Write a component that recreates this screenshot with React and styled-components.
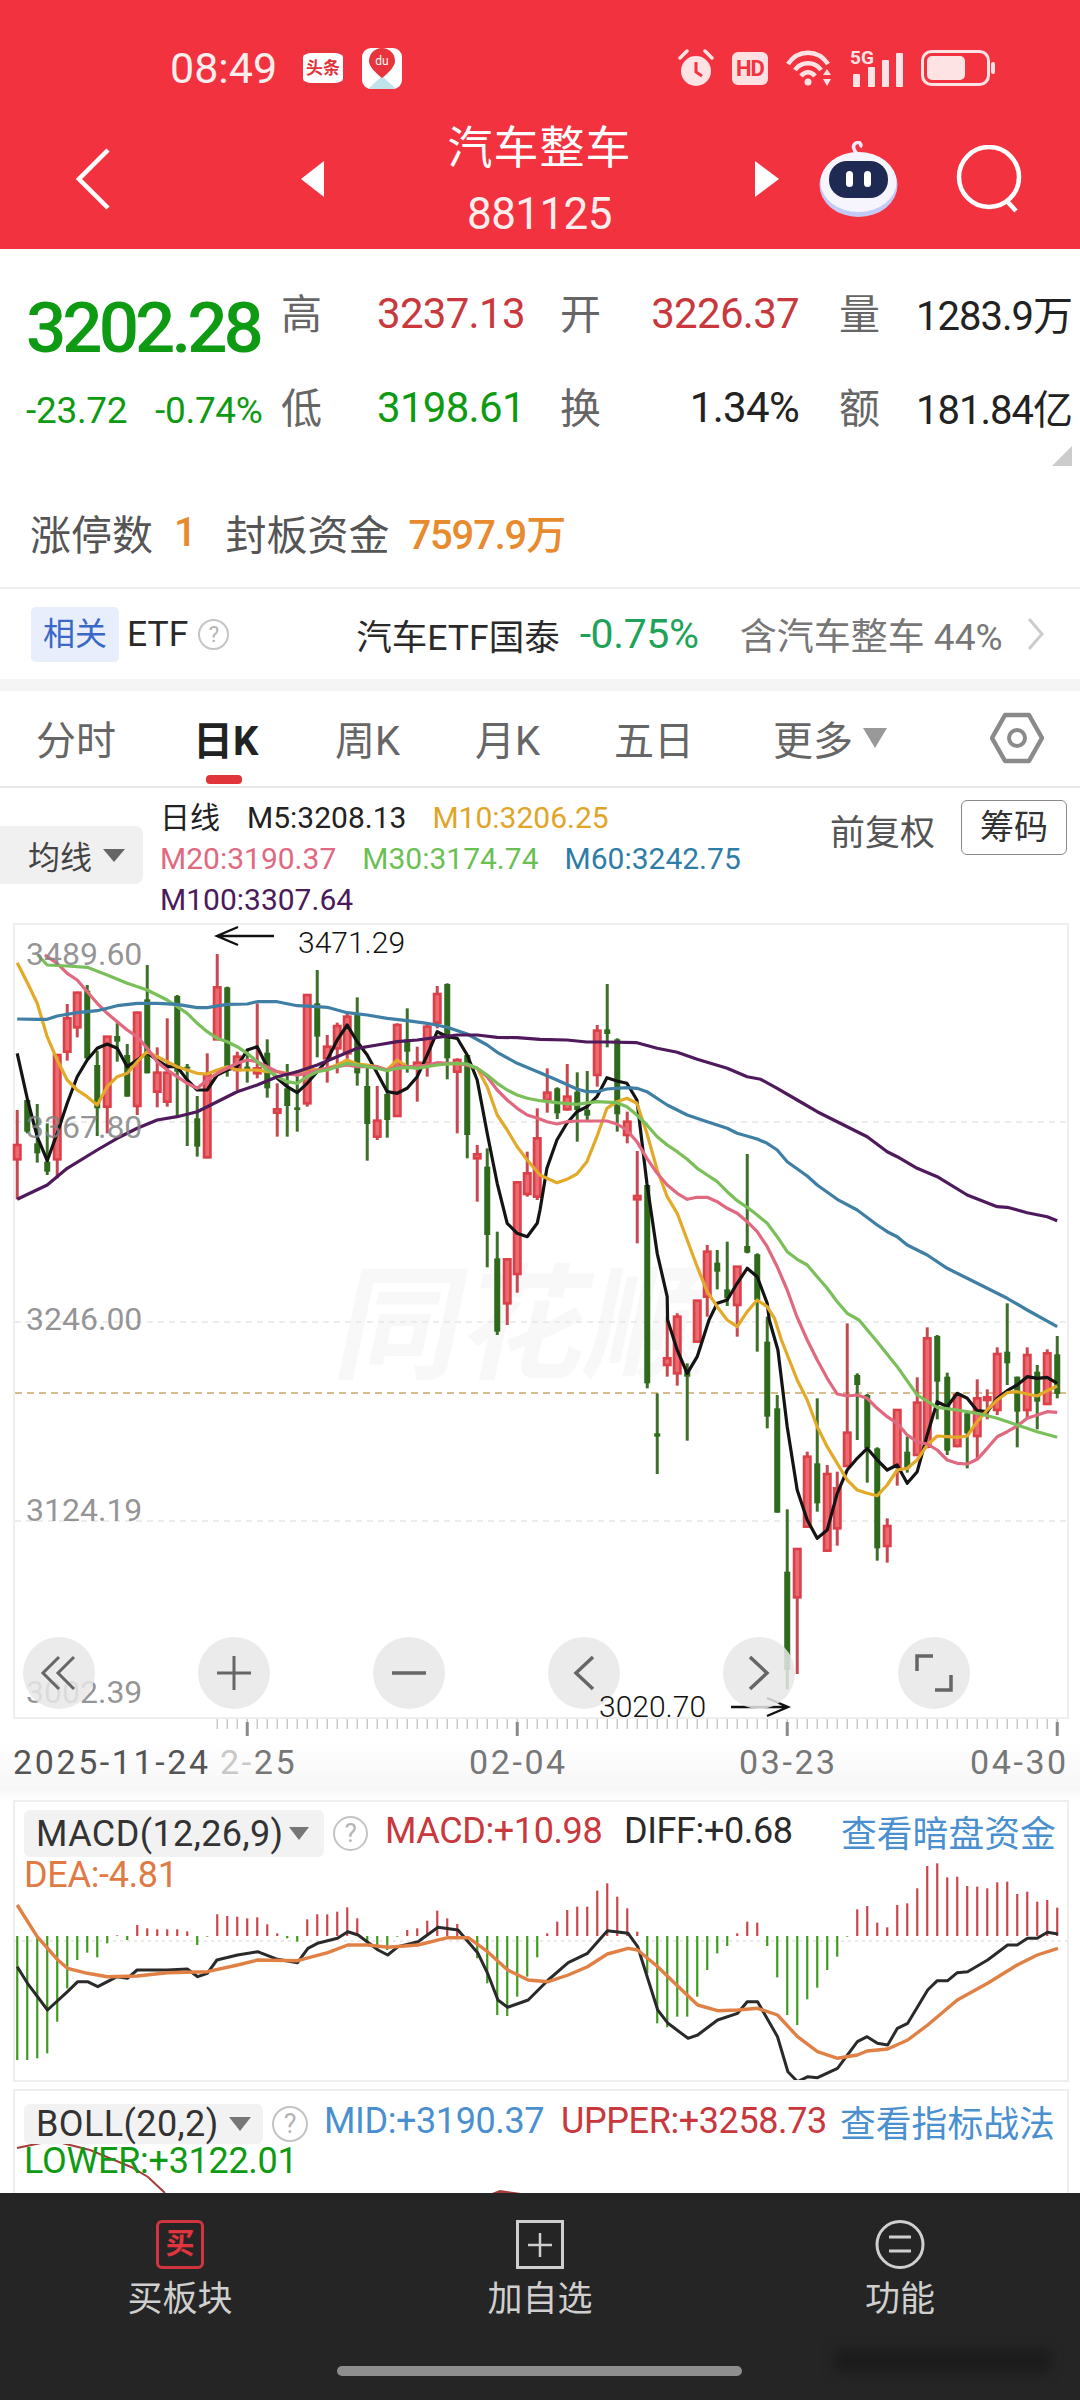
import React from 'react';
import styled, { createGlobalStyle } from 'styled-components';

const GlobalStyle = createGlobalStyle`
  html, body { margin: 0; padding: 0; background: #fff; }
  body { font-family: Roboto, "Noto Sans CJK SC", sans-serif; }
  * { box-sizing: border-box; }
`;

const RED = '#c8383c';
const GREEN = '#0f9a14';
const LINK = '#4a90d0';

// [high, bodyTop, bodyBottom, low], measured off the reference, y = 920 + v / 3
const candles = [
  ['r',570,675,718,838],['g',540,540,635,640],['g',552,670,700,728],['g',610,725,755,765],['r',402,405,718,775],
  ['r',252,295,395,422],['r',215,218,322,352],['g',195,212,415,418],['g',392,435,565,648],['r',348,350,560,640],
  ['g',310,348,365,425],['g',372,405,530,530],['r',275,278,558,585],['g',135,238,460,460],['r',382,458,515,562],
  ['r',295,458,545,560],['g',225,228,455,590],['g',432,440,445,678],['g',528,595,680,710],['r',400,465,712,715],
  ['r',102,202,358,360],['g',200,202,450,470],['r',395,410,450,510],['g',390,440,450,488],['r',250,445,460,475],
  ['g',358,398,505,533],['r',490,568,578,650],['g',432,505,558,650],['g',450,562,570,635],['r',222,225,550,560],
  ['g',150,250,350,412],['r',345,380,415,488],['r',308,318,385,460],['r',280,290,400,420],['g',232,280,460,497],
  ['g',440,498,612,722],['r',498,602,650,660],['g',450,522,600,653],['r',310,315,588,590],['g',265,358,395,458],
  ['r',380,428,440,545],['r',312,320,430,470],['r',198,222,308,325],['g',190,192,415,478],['r',415,420,455,640],
  ['g',405,405,645,715],['r',675,703,715,845],['g',685,740,945,1042],['g',935,1015,1235,1245],['r',1018,1018,1150,1215],
  ['r',785,787,1062,1118],['r',695,760,822,830],['r',565,655,830,840],['r',445,518,540,578],['g',502,505,580,597],
  ['r',432,530,568,572],['g',457,515,570,665],['g',453,570,587,600],['r',315,332,465,500],['g',192,328,342,382],
  ['g',355,358,583,635],['r',575,605,645,670],['r',693,828,838,970],['g',795,795,1390,1405],['g',1420,1540,1550,1662],
  ['r',1190,1315,1335,1370],['r',1180,1190,1360,1397],['g',1330,1350,1370,1562],['r',1140,1142,1265,1265],['r',975,995,1130,1190],
  ['g',990,1028,1055,1108],['g',965,1108,1135,1158],['r',1040,1040,1155,1250],['g',702,978,998,1000],['g',1000,1003,1140,1295],
  ['g',1190,1265,1490,1525],['g',1425,1465,1778,1778],['g',1768,1955,2250,2308],['r',1885,1887,2032,2262],['r',1595,1610,1820,1822],
  ['g',1435,1630,1750,1775],['r',1635,1662,1892,1895],['r',1655,1705,1825,1877],['r',1210,1538,1638,1640],['g',1360,1365,1395,1560],
  ['g',1422,1425,1585,1688],['g',1582,1585,1885,1922],['r',1795,1818,1878,1928],['r',1468,1470,1640,1697],['g',1550,1595,1645,1658],
  ['r',1372,1448,1605,1605],['r',1222,1255,1580,1585],['g',1245,1248,1385,1498],['g',1358,1370,1592,1605],['r',1420,1425,1578,1582],
  ['g',1480,1480,1540,1645],['r',1378,1435,1548,1620],['r',1408,1432,1440,1498],['r',1282,1302,1470,1485],['g',1150,1295,1330,1395],
  ['g',1370,1370,1475,1582],['r',1282,1305,1470,1495],['g',1335,1355,1445,1528],['r',1288,1300,1452,1455],['g',1248,1303,1422,1435],
];

const left = (pts) => pts.map(([x, y]) => [x / 2.9, 920 + y / 3]);
const right = (pts) => pts.map(([x, y]) => [540 + x / 2.9, 920 + y / 3]);
const rightLow = (pts) => pts.map(([x, y]) => [540 + x / 2.9, 1320 + y / 3]);
const wide = (pts) => pts.map(([x, y]) => [x / 1.452, 1770 + y / 3]);
const toPoints = (pts) => pts.map(([x, y]) => `${x.toFixed(1)},${y.toFixed(1)}`).join(' ');

const m5 = [
  ...left([[50,400],[80,540],[108,650],[137,722],[166,640],[195,550],[224,470],[253,420],[282,385],[311,372],[340,385],[369,440],[398,420],[427,398],[456,420],[485,440],[514,440],[543,480],[572,510],[601,510],[630,465],[659,450],[688,440],[717,390],[746,380],[775,440],[804,475],[833,500],[862,518],[891,490],[920,455],[949,420],[978,360],[1007,315],[1036,365],[1065,405],[1094,460],[1123,515],[1152,520],[1181,505],[1210,470],[1239,405],[1268,335],[1297,350],[1326,355],[1355,405],[1384,480],[1413,640],[1442,790],[1471,910],[1500,940],[1529,950]]),
  ...right([[-8,910],[0,870],[20,745],[49,660],[78,610],[107,575],[136,560],[165,530],[194,473],[223,483],[252,490],[281,540],[310,790],[340,1000],[369,1130]]),
  ...rightLow([[370,0],[398,90],[427,160],[456,110],[490,0]]),
  ...right([[514,1150],[543,1140],[572,1090],[601,1045],[630,1070],[659,1150]]),
  ...rightLow([[665,0],[690,90],[717,320],[746,510],[775,600],[804,655],[833,630],[862,520],[891,450],[920,415],[949,385],[978,420],[1007,450],[1036,435],[1065,490],[1094,455],[1123,345],[1152,245],[1181,260],[1210,220],[1239,235],[1268,272],[1297,275],[1326,235],[1355,212],[1384,195],[1413,170],[1442,175],[1471,172],[1500,190]]),
];
const m10 = [
  ...left([[50,128],[80,190],[108,250],[137,350],[166,420],[195,480],[224,510],[253,530],[282,555],[311,500],[340,470],[369,460],[398,425],[427,395],[456,410],[485,425],[514,440],[543,450],[572,460],[601,462],[630,450],[659,440],[688,450],[717,450],[746,450],[775,455],[804,455],[833,460],[862,465],[891,445],[920,450],[949,445],[978,435],[1007,420],[1036,432],[1065,435],[1094,440],[1123,450],[1152,420],[1181,440],[1210,440],[1239,435],[1268,432],[1297,432],[1326,430],[1355,435],[1384,445],[1413,500],[1442,585],[1471,630],[1500,680],[1529,720]]),
  ...right([[0,765],[20,775],[49,788],[78,778],[107,762],[136,725],[165,650],[194,565],[223,545],[252,535],[281,550],[310,640],[340,750],[369,830],[398,880],[427,960],[456,1040],[485,1115],[514,1160],[543,1200],[572,1220],[601,1175],[630,1140],[659,1160],[680,1195]]),
  ...rightLow([[700,60],[746,180],[775,240],[804,320],[833,380],[862,430],[891,480],[920,510],[949,520],[978,527],[1007,495],[1036,450],[1065,445],[1094,420],[1123,375],[1152,348],[1181,350],[1210,352],[1239,348],[1268,305],[1297,270],[1326,240],[1355,218],[1384,215],[1413,222],[1442,228],[1471,212],[1500,198]]),
];
const m20 = [
  ...left([[130,105],[166,130],[195,160],[224,180],[253,215],[282,250],[311,280],[340,305],[369,330],[398,350],[427,385],[456,425],[485,450],[514,470],[543,490],[572,505],[601,480],[630,460],[659,445],[688,430],[717,420],[746,425],[775,440],[804,455],[833,462],[862,465],[891,460],[920,450],[949,445],[978,440],[1007,435],[1036,440],[1065,440],[1094,440],[1123,450],[1152,440],[1181,440],[1210,440],[1239,435],[1268,428],[1297,430],[1326,430],[1355,435],[1384,445],[1413,470],[1442,510],[1471,540],[1500,565],[1529,585]]),
  ...right([[0,597],[20,605],[49,612],[78,605],[107,603],[136,603],[165,603],[194,603],[223,612],[252,630],[281,665],[310,715],[340,760],[369,795],[398,820],[427,838],[456,832],[485,832],[514,845],[543,865],[572,880],[601,905],[630,935],[659,980],[688,1040],[717,1110],[745,1190]]),
  ...rightLow([[775,60],[804,120],[833,175],[862,222],[891,228],[920,225],[949,235],[978,265],[1007,290],[1036,310],[1065,345],[1094,365],[1123,372],[1152,390],[1181,420],[1210,430],[1239,432],[1268,418],[1297,385],[1326,350],[1355,335],[1384,318],[1413,295],[1442,285],[1471,275],[1500,277]]),
];
const m30 = [
  ...left([[110,105],[137,135],[195,138],[253,142],[311,165],[369,190],[427,210],[485,240],[514,260],[543,280],[572,310],[601,335],[630,355],[659,365],[688,380],[717,400],[746,425],[775,450],[804,470],[833,485],[862,490],[891,470],[920,455],[949,450],[978,440],[1007,430],[1036,435],[1065,440],[1094,445],[1123,452],[1152,445],[1181,442],[1210,445],[1239,440],[1268,435],[1297,432],[1326,430],[1355,432],[1384,445],[1413,465],[1442,490],[1471,510],[1500,525],[1529,535]]),
  ...right([[0,542],[49,548],[107,553],[165,545],[223,548],[252,560],[281,585],[310,615],[340,650],[369,675],[398,695],[427,718],[456,745],[485,765],[514,785],[543,815],[572,842],[601,862],[630,885],[659,910],[688,950],[717,995],[746,1018],[775,1035],[804,1070],[833,1105],[862,1145],[891,1180]]),
  ...rightLow([[925,0],[978,65],[1036,140],[1094,225],[1152,262],[1210,270],[1268,280],[1326,295],[1384,315],[1442,335],[1500,352]]),
];
const m60 = [
  ...left([[50,297],[108,298],[137,298],[166,288],[224,278],[282,272],[340,257],[398,250],[456,250],[514,253],[572,263],[601,263],[659,253],[717,252],[746,245],[804,245],[862,257],[920,260],[949,262],[1007,278],[1065,285],[1123,295],[1181,302],[1239,310],[1297,322],[1355,342],[1413,375],[1442,397],[1500,430]]),
  ...right([[0,458],[49,480],[107,507],[136,515],[165,515],[194,507],[252,503],[281,505],[310,515],[369,555],[427,585],[485,605],[543,625],[572,640],[630,657],[659,670],[688,690],[717,725],[775,768],[804,795],[862,838],[920,870],[978,915],[1007,935],[1036,950],[1065,975],[1123,1005],[1181,1045],[1239,1075],[1297,1105],[1355,1135],[1413,1170],[1500,1220]]),
];
const m100 = [
  ...left([[50,838],[137,795],[195,745],[282,690],[340,655],[398,625],[456,600],[514,590],[572,575],[630,545],[688,515],[746,495],[804,470],[862,455],[920,435],[978,410],[1036,385],[1094,375],[1152,365],[1210,360],[1268,352],[1326,345],[1384,345],[1442,352],[1500,353]]),
  ...right([[0,358],[78,360],[136,366],[194,366],[281,368],[340,385],[398,397],[456,418],[543,445],[601,470],[640,478],[688,505],[746,540],[804,575],[862,605],[949,650],[1007,695],[1036,710],[1094,745],[1152,770],[1239,825],[1326,860],[1355,862],[1413,878],[1471,890],[1500,902]]),
];

const maLines = [
  { points: m5, color: '#141414' },
  { points: m10, color: '#e3a928' },
  { points: m20, color: '#e0697f' },
  { points: m30, color: '#7abf5a' },
  { points: m60, color: '#3f7fa6' },
  { points: m100, color: '#4f1a5b' },
];

const macdBars = [870,870,865,850,755,655,570,548,562,520,496,510,465,475,478,478,478,484,525,500,433,438,440,445,442,463,490,505,515,448,433,433,425,412,445,515,530,540,500,480,475,452,422,445,462,510,565,640,735,738,680,620,562,490,455,420,410,410,362,340,380,415,485,610,760,772,740,740,680,600,550,528,490,455,458,528,622,735,765,688,653,600,560,500,418,408,458,472,405,400,355,288,280,322,320,348,350,355,337,335,372,365,395,390,413];

const diffLine = wide([[25,590],[40,640],[69,720],[98,665],[113,635],[127,635],[142,650],[170,620],[185,625],[199,600],[243,600],[272,597],[287,620],[301,610],[315,570],[345,555],[374,545],[403,568],[432,578],[447,535],[461,520],[490,505],[505,485],[520,495],[549,540],[563,555],[578,530],[607,515],[636,472],[665,480],[694,550],[708,610],[723,690],[737,712],[767,690],[796,630],[825,578],[853,550],[882,482],[912,490],[926,530],[955,720],[970,760],[999,805],[1013,795],[1042,750],[1071,730],[1085,695],[1100,695],[1129,800],[1144,905],[1158,935],[1173,920],[1187,923],[1216,895],[1245,815],[1259,800],[1274,820],[1289,825],[1303,775],[1318,760],[1347,660],[1361,632],[1376,632],[1390,608],[1405,605],[1434,570],[1463,525],[1477,525],[1492,505],[1506,505],[1521,487],[1536,492]]);
const deaLine = wide([[25,405],[54,500],[84,570],[98,595],[127,610],[156,620],[199,618],[243,608],[301,605],[345,585],[374,570],[432,572],[476,548],[505,525],[534,525],[563,532],[607,525],[650,503],[680,503],[708,545],[737,600],[767,630],[796,635],[825,615],[853,590],[882,552],[912,535],[926,540],[955,590],[985,650],[1013,705],[1042,722],[1071,720],[1100,715],[1129,735],[1158,800],[1187,845],[1216,865],[1245,855],[1259,843],[1289,837],[1318,810],[1347,765],[1390,690],[1434,640],[1477,585],[1506,555],[1536,535]]);

const Page = styled.div`
  width: 1080px;
  height: 2400px;
  overflow: hidden;
  display: flex;
  flex-direction: column;
  background: #fff;
  color: #222;
`;

const Header = styled.header`
  height: 249px;
  flex: none;
  background: #f2333f;
  color: #fff;
  padding-top: 48px;
`;

const StatusRow = styled.div`
  display: flex;
  justify-content: space-between;
  height: 40px;
  padding: 0 85px 0 170px;
`;

const StatusGroup = styled.div`
  display: flex;
  align-items: center;
`;

const Clock = styled.span`
  font-size: 43px;
  line-height: 44px;
  width: 133px;
  color: #fdeeee;
`;

const AppBadge = styled.span`
  width: 40px;
  height: 40px;
  border-radius: 9px;
  background: #fff;
  margin-right: 19px;
  color: #e0333a;
  font-size: 17px;
  font-weight: 700;
  line-height: 30px;
  text-align: center;
  border-top: 5px solid #e8343c;
  border-bottom: 5px solid #e8343c;
  white-space: nowrap;
`;

const HdBadge = styled.span`
  width: 36px;
  height: 33px;
  border-radius: 6px;
  background: #fde1e2;
  color: #f2333f;
  font-size: 22px;
  font-weight: 700;
  text-align: center;
  line-height: 33px;
  margin: 0 18px;
  letter-spacing: -1px;
`;

const NavRow = styled.nav`
  display: flex;
  align-items: center;
  height: 120px;
  margin-top: 31px;
  padding-left: 76px;
`;

const Triangle = styled.span`
  width: 0;
  height: 0;
  flex: none;
  border-top: 18px solid transparent;
  border-bottom: 18px solid transparent;
  ${(p) => (p.$dir === 'left' ? 'border-right: 23px solid #fff;' : 'border-left: 24px solid #fff;')}
  margin-left: ${(p) => p.$gap || 0}px;
`;

const TitleBlock = styled.div`
  width: 431px;
  flex: none;
  text-align: center;
`;

const Title = styled.div`
  font-size: 45px;
  line-height: 60px;
  letter-spacing: 1px;
`;

const Code = styled.div`
  font-size: 44px;
  line-height: 50px;
  margin-top: 10px;
  letter-spacing: -0.6px;
  color: #fdeeee;
`;

const QuoteSection = styled.section`
  position: relative;
  height: 340px;
  flex: none;
  padding-top: 34px;
  border-bottom: 2px solid #eeeeee;
`;

const QuoteGrid = styled.div`
  display: grid;
  grid-template-columns: 281px 96px 183px 80px 199px 77px 164px;
  grid-template-rows: 60px 60px;
  row-gap: 34px;
  align-items: center;
`;

const PriceCell = styled.div`
  padding: 30px 0 0 26px;
  font-size: 71px;
  line-height: 60px;
  letter-spacing: -4px;
  color: ${GREEN};
  font-weight: 500;
`;

const ChangeCell = styled.div`
  display: flex;
  padding: 6px 0 0 26px;
  font-size: 37px;
  letter-spacing: -0.3px;
  color: ${GREEN};
`;

const ChangeItem = styled.span`
  width: 129px;
  flex: none;
`;

const QuoteLabel = styled.div`
  font-size: 41px;
  color: #666;
  padding-bottom: 5px;
`;

const QuoteValue = styled.div`
  font-size: ${(p) => p.$size || 42}px;
  letter-spacing: ${(p) => (p.$size ? -1 : -0.7)}px;
  white-space: nowrap;
  color: ${(p) => p.$color || '#222'};
  ${(p) => p.$end && 'text-align: right; padding-right: 40px;'}
`;

const CornerMark = styled.span`
  position: absolute;
  right: 8px;
  top: 197px;
  width: 0;
  height: 0;
  border-left: 20px solid transparent;
  border-bottom: 20px solid #cccccc;
`;

const LimitRow = styled.div`
  display: flex;
  align-items: center;
  height: 40px;
  margin-top: 75px;
  padding-left: 30px;
  font-size: 41px;
  color: #555;
`;

const LimitValue = styled.span`
  color: #e88a2e;
  font-size: 40px;
  letter-spacing: -1.2px;
  margin: 0 ${(p) => p.$after || 0}px 0 ${(p) => p.$before || 0}px;
  font-weight: 500;
`;

const EtfRow = styled.section`
  display: flex;
  align-items: center;
  height: 90px;
  flex: none;
  padding-left: 31px;
  font-size: 35.5px;
`;

const Pill = styled.span`
  width: 88px;
  height: 55px;
  flex: none;
  border-radius: 5px;
  background: #e8eefb;
  color: #3a68c8;
  font-size: 32px;
  line-height: 55px;
  text-align: center;
`;

const EtfName = styled.span`
  color: #2a2a2a;
  margin-left: ${(p) => p.$gap || 0}px;
  white-space: nowrap;
`;

const EtfChange = styled.span`
  color: #1fa35a;
  margin-left: 20px;
  font-size: 41px;
  letter-spacing: -0.4px;
  width: 160px;
  flex: none;
`;

const EtfNote = styled.span`
  color: #777;
  font-size: 37px;
  white-space: nowrap;
`;

const HelpMark = styled.span`
  width: ${(p) => p.$size || 31}px;
  height: ${(p) => p.$size || 31}px;
  flex: none;
  border: 2px solid #c4c4c4;
  border-radius: 50%;
  color: #b4b4b4;
  font-size: ${(p) => (p.$size || 31) - 9}px;
  line-height: ${(p) => (p.$size || 31) - 4}px;
  text-align: center;
  margin-left: ${(p) => p.$gap || 0}px;
`;

const Band = styled.div`
  height: 12px;
  flex: none;
  background: #f5f5f5;
`;

const TabBar = styled.div`
  position: relative;
  display: grid;
  grid-template-columns: 157px 142px 140px 139px 159px 217px 1fr;
  align-items: center;
  height: 97px;
  flex: none;
  padding: 0 0 2px 36px;
  border-bottom: 2px solid #e8e8e8;
`;

const Tab = styled.span`
  position: relative;
  display: flex;
  align-items: center;
  font-size: 40px;
  color: ${(p) => (p.$active ? '#222' : '#666')};
  font-weight: ${(p) => (p.$active ? 700 : 400)};
`;

const ActiveMark = styled.i`
  position: absolute;
  left: 13px;
  top: 66px;
  width: 36px;
  height: 9px;
  border-radius: 4px;
  background: #e0333a;
`;

const Caret = styled.span`
  display: inline-block;
  width: 0;
  height: 0;
  flex: none;
  border-left: ${(p) => p.$w / 2}px solid transparent;
  border-right: ${(p) => p.$w / 2}px solid transparent;
  border-top: ${(p) => p.$h}px solid ${(p) => p.$color || '#777'};
  margin-left: ${(p) => p.$gap || 0}px;
`;

const LegendRow = styled.section`
  display: flex;
  height: 135px;
  flex: none;
`;

const MaChip = styled.span`
  display: flex;
  align-items: center;
  width: 143px;
  height: 58px;
  margin-top: 38px;
  padding-left: 28px;
  border-radius: 0 8px 8px 0;
  background: #f0f0f0;
  font-size: 32px;
  color: #444;
`;

const LegendLines = styled.div`
  width: 687px;
  flex: none;
  padding: 9px 0 0 17px;
  font-size: 30px;
  line-height: 41px;
`;

const LegendLine = styled.div`
  display: flex;
  white-space: nowrap;
`;

const LegendItem = styled.span`
  color: ${(p) => p.$color || '#222'};
  margin-right: ${(p) => p.$gap || 26}px;
`;

const AdjustLabel = styled.span`
  font-size: 35px;
  color: #555;
  margin-top: 16px;
  white-space: nowrap;
`;

const ChipButton = styled.span`
  width: 106px;
  height: 55px;
  margin: 12px 0 0 26px;
  border: 1.5px solid #8a8a8a;
  border-radius: 6px;
  font-size: 34px;
  line-height: 52px;
  text-align: center;
  color: #333;
`;

const ChartFrame = styled.div`
  position: relative;
  width: 1056px;
  height: 796px;
  flex: none;
  margin-left: 13px;
  border: 2px solid #eeeeee;
`;

const ChartSvg = styled.svg`
  position: absolute;
  inset: 0;
  width: 100%;
  height: 100%;
  overflow: visible;
`;

const Watermark = styled.span`
  position: absolute;
  left: 325px;
  top: 332px;
  font-size: 125px;
  line-height: 140px;
  font-weight: 700;
  color: #f8f8f8;
  transform: skewX(-12deg);
  white-space: nowrap;
`;

const AxisLabel = styled.span`
  position: absolute;
  left: 11px;
  top: ${(p) => p.$top}px;
  font-size: 32px;
  line-height: 32px;
  color: rgba(130, 130, 130, 0.85);
`;

const PeakLabel = styled.span`
  position: absolute;
  left: ${(p) => p.$left}px;
  top: ${(p) => p.$top}px;
  font-size: 30px;
  line-height: 30px;
  font-weight: 300;
  color: #111;
`;

const ControlRow = styled.div`
  position: absolute;
  left: 8px;
  top: 712px;
  display: flex;
  gap: 103px;
`;

const RoundControl = styled.span`
  display: flex;
  align-items: center;
  justify-content: center;
  width: 72px;
  height: 72px;
  border-radius: 50%;
  background: rgba(232, 232, 232, 0.85);
`;

const TimeAxis = styled.div`
  height: 81px;
  flex: none;
  background: linear-gradient(#fff 20px, #f7f7f7 70px, #fff 81px);
`;

const TickSvg = styled.svg`
  display: block;
  width: 1080px;
  height: 18px;
`;

const DateRow = styled.div`
  display: grid;
  grid-template-columns: 207px 249px 270px 231px 1fr;
  padding: 8px 0 0 13px;
  font-size: 34px;
  line-height: 34px;
  letter-spacing: 2.6px;
  color: #777;
`;

const DateLabel = styled.span`
  color: ${(p) => p.$color || '#777'};
  white-space: nowrap;
`;

const Faded = styled.span`
  color: #c8c8c8;
`;

const IndicatorPanel = styled.section`
  position: relative;
  width: 1056px;
  height: ${(p) => p.$height}px;
  flex: none;
  overflow: hidden;
  margin: ${(p) => p.$top || 0}px 0 0 13px;
  border: 2px solid #eeeeee;
  ${(p) => p.$open && 'border-bottom: 0;'}
`;

const PanelSvg = styled.svg`
  position: absolute;
  inset: 0;
  width: 100%;
  height: 100%;
`;

const PanelHead = styled.div`
  position: relative;
  display: flex;
  align-items: center;
  margin-top: ${(p) => p.$top}px;
  padding-left: 9px;
  font-size: 36px;
  letter-spacing: -0.4px;
  white-space: nowrap;
`;

const IndicatorChip = styled.span`
  display: flex;
  align-items: center;
  width: ${(p) => p.$width}px;
  height: ${(p) => p.$height}px;
  flex: none;
  padding-left: 12px;
  border-radius: 6px;
  background: #f2f2f2;
  color: #333;
  font-size: 36px;
  letter-spacing: 0.4px;
`;

const PanelValue = styled.span`
  color: ${(p) => p.$color};
  margin: -5px 0 0 ${(p) => p.$gap || 0}px;
  width: ${(p) => p.$width}px;
  flex: none;
`;

const PanelLink = styled.span`
  color: ${LINK};
  font-size: 35.8px;
  letter-spacing: 0;
  margin-top: -5px;
`;

const PanelSecond = styled.div`
  position: relative;
  padding-left: 9px;
  font-size: 36px;
  line-height: 40px;
  letter-spacing: -0.3px;
  margin-top: ${(p) => p.$top}px;
  color: ${(p) => p.$color};
`;

const BottomBar = styled.footer`
  position: relative;
  height: 207px;
  flex: none;
  background: #252525;
  padding-top: 27px;
`;

const ActionGrid = styled.div`
  display: grid;
  grid-template-columns: repeat(3, 360px);
`;

const Action = styled.div`
  display: flex;
  flex-direction: column;
  align-items: center;
  gap: 13px;
  color: #cfcfcf;
  font-size: 35px;
  line-height: 36px;
`;

const BuyIcon = styled.span`
  width: 48px;
  height: 49px;
  border: 3px solid #d0353f;
  border-radius: 6px;
  color: #e0353f;
  font-size: 29px;
  line-height: 42px;
  font-weight: 700;
  text-align: center;
`;

const HomePill = styled.div`
  width: 405px;
  height: 10px;
  margin: 48px 0 0 337px;
  border-radius: 5px;
  background: #8e8e8e;
`;

const ScreenSmudge = styled.div`
  position: absolute;
  left: 835px;
  top: 157px;
  width: 215px;
  height: 22px;
  background: #1b1b1b;
  filter: blur(6px);
`;

function AlarmIcon() {
  return (
    <svg width="36" height="38" viewBox="0 0 36 38">
      <path d="M2 9 L9 2 M34 9 L27 2" stroke="#fde3e4" strokeWidth="3.5" strokeLinecap="round" />
      <circle cx="18" cy="22" r="15" fill="#fde3e4" />
      <path d="M18 13 V23 L24 27" stroke="#f2333f" strokeWidth="3" fill="none" />
    </svg>
  );
}

function WifiIcon() {
  return (
    <svg width="49" height="38" viewBox="0 0 49 38">
      <g fill="none" stroke="#fde3e4" strokeWidth="4.5">
        <path d="M2 15 C12 0 32 0 42 15" />
        <path d="M9 21 C15 12 29 12 35 21" />
        <path d="M15 27 C19 22 25 22 29 27" />
      </g>
      <circle cx="22" cy="33" r="3.5" fill="#fde3e4" />
      <path d="M37 26 L41 20 L45 26 Z M37 30 L45 30 L41 37 Z" fill="#fde3e4" />
    </svg>
  );
}

function SignalIcon() {
  return (
    <svg width="53" height="38" viewBox="0 0 53 38" overflow="visible">
      <text x="0" y="15" fontSize="19" fontWeight="700" fill="#fde3e4" fontFamily="Roboto, sans-serif">5G</text>
      <g fill="#fde3e4">
        <rect x="3" y="25" width="7" height="13" rx="1" />
        <rect x="18" y="18" width="7" height="20" rx="1" />
        <rect x="32" y="11" width="7" height="27" rx="1" />
        <rect x="46" y="4" width="7" height="34" rx="1" />
      </g>
    </svg>
  );
}

function BatteryIcon() {
  return (
    <svg width="74" height="36" viewBox="0 0 74 36">
      <rect x="1.5" y="1.5" width="66" height="33" rx="9" fill="none" stroke="#fde3e4" strokeWidth="3" />
      <rect x="6" y="6" width="38" height="24" rx="5" fill="#fde3e4" />
      <rect x="70" y="12" width="4" height="12" rx="2" fill="#fde3e4" />
    </svg>
  );
}

function RobotIcon() {
  return (
    <svg width="79" height="76" viewBox="0 0 79 76">
      <path d="M39 14 C34 9 33 4 37 2 C41 0 43 4 41 6" stroke="#eeeafc" strokeWidth="3.5" fill="none" />
      <ellipse cx="39.5" cy="44" rx="39" ry="32" fill="#c4caf5" />
      <ellipse cx="39.5" cy="41" rx="38" ry="30" fill="#f6f5fe" />
      <rect x="10" y="20" width="59" height="37" rx="18" fill="#1f2a52" />
      <rect x="27" y="30" width="7" height="16" rx="3.5" fill="#fff" />
      <rect x="45" y="30" width="7" height="16" rx="3.5" fill="#fff" />
    </svg>
  );
}

function Candle({ index, data }) {
  const [kind, high, top, bottom, low] = data;
  const x = 17.24 + index * 10;
  const y = (v) => 920 + v / 3;
  if (kind === 'g') {
    return (
      <g>
        <line x1={x} x2={x} y1={y(high)} y2={y(low)} stroke="#3c7029" strokeWidth="3" />
        <rect x={x - 3} y={y(top)} width="6" height={Math.max((bottom - top) / 3, 2)} fill="#2f6a1c" />
      </g>
    );
  }
  return (
    <g>
      <line x1={x} x2={x} y1={y(high)} y2={y(top)} stroke="#c8484f" strokeWidth="3" />
      <line x1={x} x2={x} y1={y(bottom)} y2={y(low)} stroke="#c8484f" strokeWidth="3" />
      <rect x={x - 3.2} y={y(top)} width="6.4" height={Math.max((bottom - top) / 3, 2)} fill="#ea6a70" stroke="#dd3f48" strokeWidth="2.6" />
    </g>
  );
}

function MainChart() {
  return (
    <ChartSvg viewBox="15 925 1052 792">
      {[1122, 1322, 1521].map((y) => (
        <line key={y} x1="15" x2="1067" y1={y} y2={y} stroke="#e6e6e6" strokeWidth="1.5" strokeDasharray="6 5" />
      ))}
      <line x1="15" x2="1067" y1="1393" y2="1393" stroke="#c9a86c" strokeWidth="1.5" strokeDasharray="7 5" />
      {candles.map((c, i) => (
        <Candle key={i} index={i} data={c} />
      ))}
      {maLines.map((line) => (
        <polyline key={line.color} points={toPoints(line.points)} fill="none" stroke={line.color} strokeWidth="3.2" strokeLinejoin="round" />
      ))}
      <g fill="none" stroke="#111" strokeWidth="2.4">
        <path d="M217 936 H274 M238 927 L217 936 L238 945" />
        <path d="M731 1707 H788 M767 1698 L788 1707 L767 1716" />
      </g>
    </ChartSvg>
  );
}

function TickRuler() {
  const ticks = [];
  for (let i = 20; i <= 104; i++) {
    ticks.push(17.24 + i * 10);
  }
  const majors = [23, 50, 77, 104].map((i) => 17.24 + i * 10);
  return (
    <TickSvg viewBox="0 1719 1080 18">
      {ticks.map((x) => (
        <line key={x} x1={x} x2={x} y1="1719" y2="1729" stroke="#bdbdbd" strokeWidth="1.2" />
      ))}
      {majors.map((x) => (
        <line key={x} x1={x} x2={x} y1="1722" y2="1736" stroke="#8a8a8a" strokeWidth="3" />
      ))}
    </TickSvg>
  );
}

function MacdChart() {
  const zero = 1770 + 498 / 3;
  return (
    <PanelSvg viewBox="15 1802 1052 278">
      <line x1="15" x2="1067" y1="1941" y2="1941" stroke="#e4e4e4" strokeWidth="1.5" strokeDasharray="3 4" />
      {macdBars.map((v, i) => {
        const x = 17.24 + i * 10;
        return (
          <line key={i} x1={x} x2={x} y1={zero} y2={1770 + v / 3} stroke={v > 498 ? '#3f9a1e' : '#c8464a'} strokeWidth="2.2" />
        );
      })}
      <polyline points={toPoints(diffLine)} fill="none" stroke="#2a2a2a" strokeWidth="3" strokeLinejoin="round" />
      <polyline points={toPoints(deaLine)} fill="none" stroke="#e08045" strokeWidth="3.4" strokeLinejoin="round" />
    </PanelSvg>
  );
}

export default function App() {
  return (
    <Page>
      <GlobalStyle />
      <Header>
        <StatusRow>
          <StatusGroup>
            <Clock>08:49</Clock>
            <AppBadge>头条</AppBadge>
            <svg width="40" height="41" viewBox="0 0 40 41">
              <rect width="40" height="41" rx="9" fill="#fff" />
              <path d="M6 41 L20 28 L34 41 Z" fill="#bfe3e8" />
              <path d="M20 30 C10 22 7 17 7 13 A13 13 0 0 1 33 13 C33 17 30 22 20 30 Z" fill="#e8343c" />
              <text x="20" y="17" fontSize="12" fill="#fff" textAnchor="middle" fontFamily="Roboto, sans-serif">du</text>
            </svg>
          </StatusGroup>
          <StatusGroup>
            <AlarmIcon />
            <HdBadge>HD</HdBadge>
            <WifiIcon />
            <span style={{ width: 15 }} />
            <SignalIcon />
            <span style={{ width: 18 }} />
            <BatteryIcon />
          </StatusGroup>
        </StatusRow>
        <NavRow>
          <svg width="34" height="62" viewBox="0 0 34 62">
            <path d="M32 2 L3 31 L32 60" fill="none" stroke="#fff" strokeWidth="4.5" />
          </svg>
          <Triangle $dir="left" $gap={191} />
          <TitleBlock>
            <Title>汽车整车</Title>
            <Code>881125</Code>
          </TitleBlock>
          <Triangle $dir="right" />
          <span style={{ width: 40 }} />
          <RobotIcon />
          <span style={{ width: 58 }} />
          <svg width="68" height="68" viewBox="0 0 68 68">
            <circle cx="33" cy="32" r="30" fill="none" stroke="#fff" strokeWidth="4.5" />
            <path d="M50 55 L60 66" stroke="#fff" strokeWidth="4.5" />
          </svg>
        </NavRow>
      </Header>

      <QuoteSection>
        <QuoteGrid>
          <PriceCell>3202.28</PriceCell>
          <QuoteLabel>高</QuoteLabel>
          <QuoteValue $color={RED}>3237.13</QuoteValue>
          <QuoteLabel>开</QuoteLabel>
          <QuoteValue $color={RED} $end>3226.37</QuoteValue>
          <QuoteLabel>量</QuoteLabel>
          <QuoteValue $size={40}>1283.9万</QuoteValue>
          <ChangeCell>
            <ChangeItem>-23.72</ChangeItem>
            <ChangeItem>-0.74%</ChangeItem>
          </ChangeCell>
          <QuoteLabel>低</QuoteLabel>
          <QuoteValue $color={GREEN}>3198.61</QuoteValue>
          <QuoteLabel>换</QuoteLabel>
          <QuoteValue $end>1.34%</QuoteValue>
          <QuoteLabel>额</QuoteLabel>
          <QuoteValue $size={40}>181.84亿</QuoteValue>
        </QuoteGrid>
        <CornerMark />
        <LimitRow>
          涨停数
          <LimitValue $before={21} $after={30}>1</LimitValue>
          封板资金
          <LimitValue $before={19}>7597.9万</LimitValue>
        </LimitRow>
      </QuoteSection>

      <EtfRow>
        <Pill>相关</Pill>
        <EtfName $gap={8}>ETF</EtfName>
        <HelpMark $gap={10}>?</HelpMark>
        <EtfName $gap={127}>汽车ETF国泰</EtfName>
        <EtfChange>-0.75%</EtfChange>
        <EtfNote>含汽车整车 44%</EtfNote>
        <svg width="18" height="34" viewBox="0 0 18 34" style={{ marginLeft: 24 }}>
          <path d="M2 2 L15 17 L2 32" fill="none" stroke="#cccccc" strokeWidth="3" />
        </svg>
      </EtfRow>
      <Band />

      <TabBar>
        <Tab>分时</Tab>
        <Tab $active>
          日K
          <ActiveMark />
        </Tab>
        <Tab>周K</Tab>
        <Tab>月K</Tab>
        <Tab>五日</Tab>
        <Tab>
          更多
          <Caret $w={24} $h={20} $color="#999" $gap={10} />
        </Tab>
        <svg width="54" height="52" viewBox="0 0 54 52">
          <path d="M15 3 H39 L52 26 L39 49 H15 L2 26 Z" fill="none" stroke="#8a8a8a" strokeWidth="4.5" strokeLinejoin="round" />
          <circle cx="27" cy="26" r="8" fill="none" stroke="#8a8a8a" strokeWidth="4" />
        </svg>
      </TabBar>

      <LegendRow>
        <MaChip>
          均线
          <Caret $w={22} $h={13} $color="#666" $gap={11} />
        </MaChip>
        <LegendLines>
          <LegendLine>
            <LegendItem $gap={27}>日线</LegendItem>
            <LegendItem>M5:3208.13</LegendItem>
            <LegendItem $color="#e0a528">M10:3206.25</LegendItem>
          </LegendLine>
          <LegendLine>
            <LegendItem $color="#e0697f">M20:3190.37</LegendItem>
            <LegendItem $color="#6cbf55">M30:3174.74</LegendItem>
            <LegendItem $color="#2f7da6">M60:3242.75</LegendItem>
          </LegendLine>
          <LegendLine>
            <LegendItem $color="#4a1a5a">M100:3307.64</LegendItem>
          </LegendLine>
        </LegendLines>
        <AdjustLabel>前复权</AdjustLabel>
        <ChipButton>筹码</ChipButton>
      </LegendRow>

      <ChartFrame>
        <Watermark>同花顺</Watermark>
        <MainChart />
        <AxisLabel $top={13}>3489.60</AxisLabel>
        <AxisLabel $top={186}>3367.80</AxisLabel>
        <AxisLabel $top={378}>3246.00</AxisLabel>
        <AxisLabel $top={569}>3124.19</AxisLabel>
        <AxisLabel $top={751}>3002.39</AxisLabel>
        <PeakLabel $left={283} $top={3}>3471.29</PeakLabel>
        <ControlRow>
          <RoundControl>
            <svg width="38" height="38" viewBox="0 0 38 38">
              <path d="M19 3 L3 19 L19 35 M34 3 L18 19 L34 35" fill="none" stroke="#666" strokeWidth="3" />
            </svg>
          </RoundControl>
          <RoundControl>
            <svg width="36" height="36" viewBox="0 0 36 36">
              <path d="M18 1 V35 M1 18 H35" stroke="#666" strokeWidth="3" />
            </svg>
          </RoundControl>
          <RoundControl>
            <svg width="36" height="36" viewBox="0 0 36 36">
              <path d="M1 18 H35" stroke="#666" strokeWidth="3.5" />
            </svg>
          </RoundControl>
          <RoundControl>
            <svg width="22" height="38" viewBox="0 0 22 38">
              <path d="M20 3 L3 19 L20 35" fill="none" stroke="#666" strokeWidth="3.5" />
            </svg>
          </RoundControl>
          <RoundControl>
            <svg width="22" height="38" viewBox="0 0 22 38">
              <path d="M2 3 L19 19 L2 35" fill="none" stroke="#666" strokeWidth="3.5" />
            </svg>
          </RoundControl>
          <RoundControl>
            <svg width="38" height="38" viewBox="0 0 38 38">
              <path d="M2 17 V2 H18 M36 21 V36 H20" fill="none" stroke="#666" strokeWidth="3.5" />
            </svg>
          </RoundControl>
        </ControlRow>
        <PeakLabel $left={584} $top={767}>3020.70</PeakLabel>
      </ChartFrame>

      <TimeAxis>
        <TickRuler />
        <DateRow>
          <DateLabel $color="#555">2025-11-24</DateLabel>
          <DateLabel><Faded>2-</Faded>25</DateLabel>
          <DateLabel>02-04</DateLabel>
          <DateLabel>03-23</DateLabel>
          <DateLabel>04-30</DateLabel>
        </DateRow>
      </TimeAxis>

      <IndicatorPanel $height={282}>
        <MacdChart />
        <PanelHead $top={8}>
          <IndicatorChip $width={300} $height={47}>
            MACD(12,26,9)
            <Caret $w={20} $h={13} $color="#777" $gap={6} />
          </IndicatorChip>
          <HelpMark $size={35} $gap={9}>?</HelpMark>
          <PanelValue $color={RED} $gap={17} $width={239}>MACD:+10.98</PanelValue>
          <PanelValue $color="#2a2a2a" $width={217}>DIFF:+0.68</PanelValue>
          <PanelLink>查看暗盘资金</PanelLink>
        </PanelHead>
        <PanelSecond $top={-2} $color="#e07a45">DEA:-4.81</PanelSecond>
      </IndicatorPanel>

      <IndicatorPanel $height={104} $top={7} $open>
        <PanelSvg viewBox="15 2091 1052 102">
          <path d="M17 2148 L41 2143 L62 2143 L90 2150 L131 2167 L148 2177 L165 2193" fill="none" stroke="#a83a3a" strokeWidth="2" />
          <path d="M492 2193 L500 2190 L521 2193 Z" fill="#a83a3a" />
        </PanelSvg>
        <PanelHead $top={9}>
          <IndicatorChip $width={239} $height={40}>
            BOLL(20,2)
            <Caret $w={22} $h={14} $color="#777" $gap={10} />
          </IndicatorChip>
          <HelpMark $size={36} $gap={9}>?</HelpMark>
          <PanelValue $color={LINK} $gap={16} $width={237}>MID:+3190.37</PanelValue>
          <PanelValue $color={RED} $width={279}>UPPER:+3258.73</PanelValue>
          <PanelLink>查看指标战法</PanelLink>
        </PanelHead>
        <PanelSecond $top={-6} $color={GREEN}>LOWER:+3122.01</PanelSecond>
      </IndicatorPanel>

      <BottomBar>
        <ActionGrid>
          <Action>
            <BuyIcon>买</BuyIcon>
            买板块
          </Action>
          <Action>
            <svg width="48" height="49" viewBox="0 0 48 49">
              <rect x="1.5" y="1.5" width="45" height="46" fill="none" stroke="#cfcfcf" strokeWidth="3" />
              <path d="M24 13 V37 M12 25 H36" stroke="#cfcfcf" strokeWidth="2.5" />
            </svg>
            加自选
          </Action>
          <Action>
            <svg width="50" height="49" viewBox="0 0 50 49">
              <circle cx="25" cy="24.5" r="23" fill="none" stroke="#cfcfcf" strokeWidth="3" />
              <path d="M14 17 H36 M14 31 H36" stroke="#cfcfcf" strokeWidth="3" />
            </svg>
            功能
          </Action>
        </ActionGrid>
        <HomePill />
        <ScreenSmudge />
      </BottomBar>
    </Page>
  );
}
